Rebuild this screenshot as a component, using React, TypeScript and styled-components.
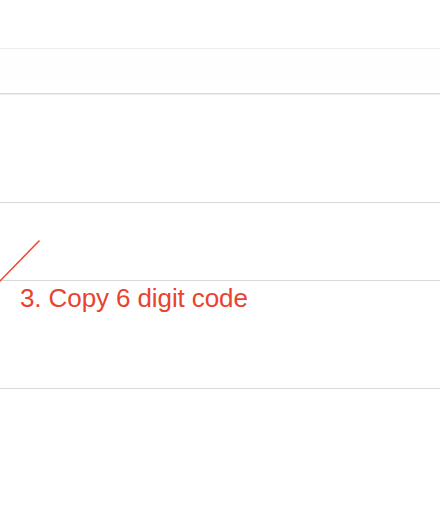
import React from "react";
import styled, { createGlobalStyle } from "styled-components";

const Global = createGlobalStyle`
  html, body { margin: 0; padding: 0; background: #ffffff; }
  body { font-family: "Liberation Sans", Arial, sans-serif; }
`;

const Page = styled.div`
  position: relative;
  width: 440px;
  height: 522px;
  overflow: hidden;
  background: #ffffff;
`;

const Block = styled.div<{ $h: number; $border: string; $bg?: string }>`
  height: ${(p) => p.$h}px;
  border-bottom: 1px solid ${(p) => p.$border};
  background: ${(p) => p.$bg || "#ffffff"};
`;

const Band = styled.div`
  height: 44px;
  background: #fefefe;
  border-bottom: 1px solid #dcdcdc;
  box-shadow: 0 1px 0 #ececec;
  margin-bottom: 1px;
`;

const Caption = styled.div`
  border-bottom: 1px solid #dadada;
  padding: 4px 0 0 20px;
  box-sizing: border-box;
  height: 108px;
  font-size: 26px;
  line-height: 26px;
  color: #e8432f;
  letter-spacing: -0.1px;
`;

const Arrow = styled.svg`
  position: absolute;
  left: 0;
  top: 238px;
`;

export default function App() {
  return (
    <Page>
      <Global />
      <Block $h={48} $border="#ededed" />
      <Band />
      <Block $h={107} $border="#d9d9d9" />
      <Block $h={77} $border="#d9d9d9" />
      <Caption>3. Copy 6 digit code</Caption>
      <Arrow width="44" height="46" viewBox="0 0 44 46">
        <line x1="-1" y1="44" x2="39.5" y2="2.5" stroke="#ec4431" strokeWidth="1.5" />
      </Arrow>
    </Page>
  );
}
